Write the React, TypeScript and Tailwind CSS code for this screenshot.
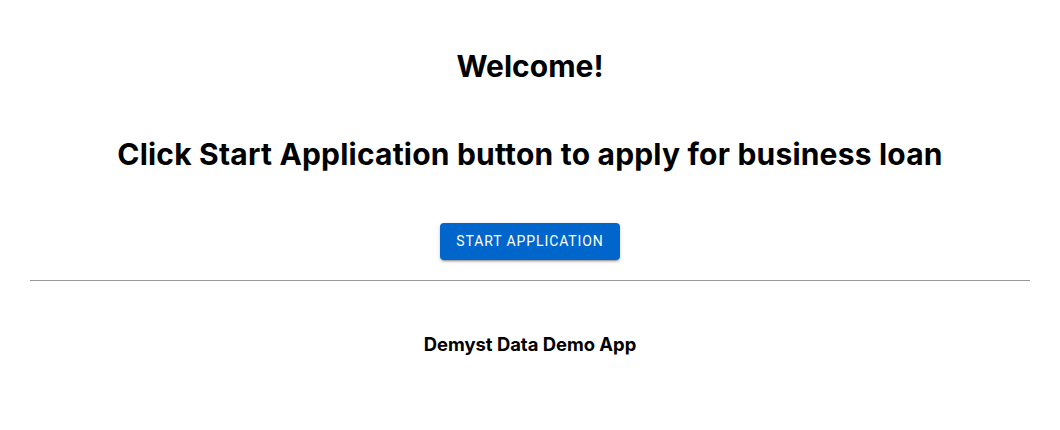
import React from 'react';

const App = () => {
  return (
    <div className="min-h-screen bg-white text-black font-['Inter',sans-serif] px-[30px]">
      <div className="flex flex-col items-center pt-[46px]">
        <h1 className="text-[30px] leading-[40px] font-bold">Welcome!</h1>
        <h2 className="mt-[48px] text-[30px] leading-[40px] font-bold tracking-[0.2px]">
          Click Start Application button to apply for business loan
        </h2>
        <button
          className="mt-[49px] h-[37px] px-4 rounded bg-[#0066cc] text-white text-[14px] tracking-[0.9px] uppercase font-['Roboto',sans-serif] shadow-[0_3px_1px_-2px_rgba(0,0,0,0.2),0_2px_2px_0_rgba(0,0,0,0.14),0_1px_5px_0_rgba(0,0,0,0.12)]"
        >
          Start Application
        </button>
      </div>
      <hr className="mt-[20px] border-t border-[#999]" />
      <div className="flex justify-center pt-[51px]">
        <p className="text-[18.4px] leading-[24px] font-bold">Demyst Data Demo App</p>
      </div>
    </div>
  );
};

export default App;
